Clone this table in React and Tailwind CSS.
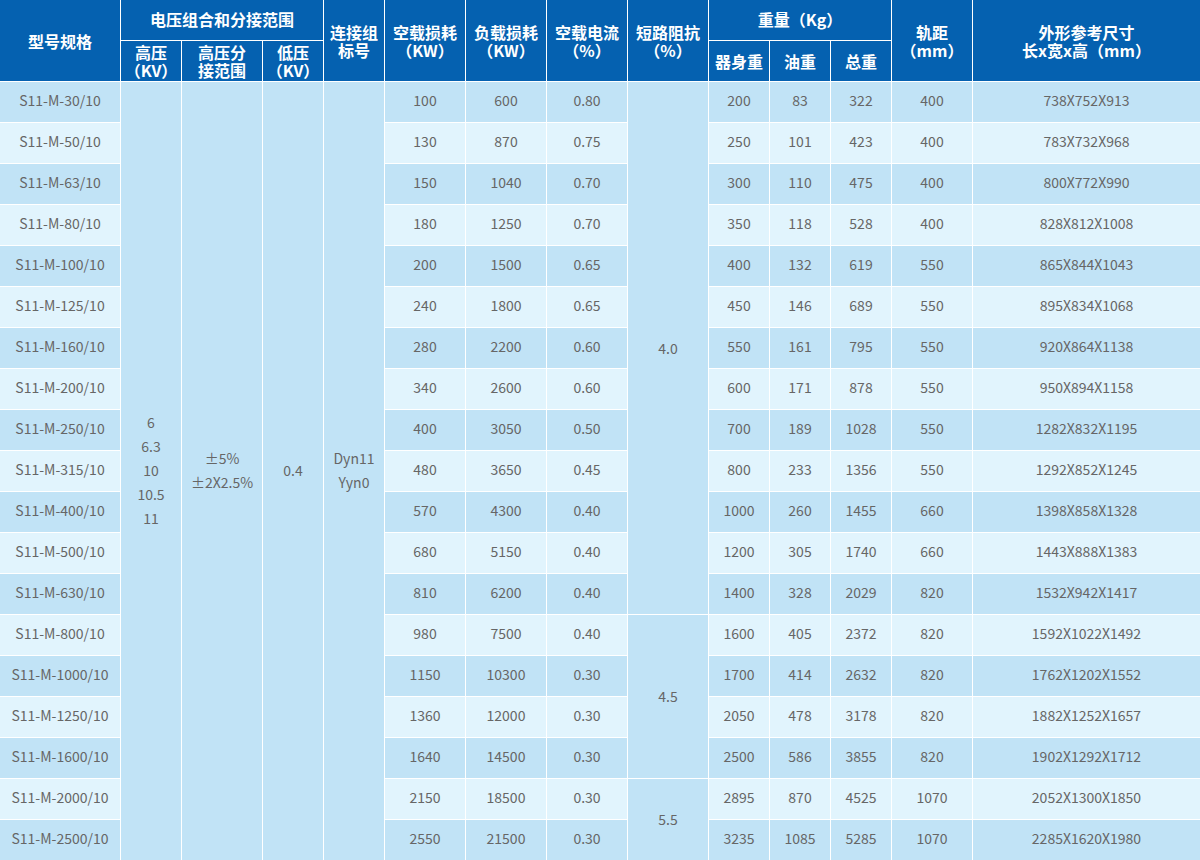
import React from "react";

const rows = [
  ["S11-M-30/10", 100, 600, "0.80", 200, 83, 322, 400, "738X752X913"],
  ["S11-M-50/10", 130, 870, "0.75", 250, 101, 423, 400, "783X732X968"],
  ["S11-M-63/10", 150, 1040, "0.70", 300, 110, 475, 400, "800X772X990"],
  ["S11-M-80/10", 180, 1250, "0.70", 350, 118, 528, 400, "828X812X1008"],
  ["S11-M-100/10", 200, 1500, "0.65", 400, 132, 619, 550, "865X844X1043"],
  ["S11-M-125/10", 240, 1800, "0.65", 450, 146, 689, 550, "895X834X1068"],
  ["S11-M-160/10", 280, 2200, "0.60", 550, 161, 795, 550, "920X864X1138"],
  ["S11-M-200/10", 340, 2600, "0.60", 600, 171, 878, 550, "950X894X1158"],
  ["S11-M-250/10", 400, 3050, "0.50", 700, 189, 1028, 550, "1282X832X1195"],
  ["S11-M-315/10", 480, 3650, "0.45", 800, 233, 1356, 550, "1292X852X1245"],
  ["S11-M-400/10", 570, 4300, "0.40", 1000, 260, 1455, 660, "1398X858X1328"],
  ["S11-M-500/10", 680, 5150, "0.40", 1200, 305, 1740, 660, "1443X888X1383"],
  ["S11-M-630/10", 810, 6200, "0.40", 1400, 328, 2029, 820, "1532X942X1417"],
  ["S11-M-800/10", 980, 7500, "0.40", 1600, 405, 2372, 820, "1592X1022X1492"],
  ["S11-M-1000/10", 1150, 10300, "0.30", 1700, 414, 2632, 820, "1762X1202X1552"],
  ["S11-M-1250/10", 1360, 12000, "0.30", 2050, 478, 3178, 820, "1882X1252X1657"],
  ["S11-M-1600/10", 1640, 14500, "0.30", 2500, 586, 3855, 820, "1902X1292X1712"],
  ["S11-M-2000/10", 2150, 18500, "0.30", 2895, 870, 4525, 1070, "2052X1300X1850"],
  ["S11-M-2500/10", 2550, 21500, "0.30", 3235, 1085, 5285, 1070, "2285X1620X1980"],
];

const dark = "bg-[#c1e3f6]";
const light = "bg-[#e1f4fd]";

const Th = ({ className = "", children }) => (
  <div
    className={`bg-[#0561b0] text-white font-bold text-[16px] leading-[18px] flex flex-col items-center justify-center text-center ${className}`}
  >
    {children}
  </div>
);

// plain row cells sit a touch above centre in the reference
const Td = ({ bg, className = "pb-[4px]", children }) => (
  <div className={`${bg} flex items-center justify-center ${className}`}>
    {children}
  </div>
);

const App = () => {
  return (
    <div
      className="w-[1200px] h-[860px] overflow-hidden bg-white"
      style={{ fontFamily: '"Noto Sans CJK SC", "Noto Sans", sans-serif' }}
    >
      <div className="grid grid-cols-[120px_60px_80px_60px_60px_80px_80px_80px_80px_60px_60px_60px_80px_1fr] auto-rows-[40px] gap-px bg-white text-[#666] text-[14px]">
        {/* header */}
        <Th className="row-span-2">型号规格</Th>
        <Th className="col-span-3 pb-[2px]">电压组合和分接范围</Th>
        <Th className="row-span-2">
          <span>连接组</span>
          <span>标号</span>
        </Th>
        <Th className="row-span-2">
          <span>空载损耗</span>
          <span>（KW）</span>
        </Th>
        <Th className="row-span-2">
          <span>负载损耗</span>
          <span>（KW）</span>
        </Th>
        <Th className="row-span-2">
          <span>空载电流</span>
          <span>（%）</span>
        </Th>
        <Th className="row-span-2">
          <span>短路阻抗</span>
          <span>（%）</span>
        </Th>
        <Th className="col-span-3 pb-[2px]">重量（Kg）</Th>
        <Th className="row-span-2">
          <span>轨距</span>
          <span>（mm）</span>
        </Th>
        <Th className="row-span-2">
          <span>外形参考尺寸</span>
          <span>长x宽x高（mm）</span>
        </Th>
        <Th className="leading-[16px]">
          <span>高压</span>
          <span>（KV）</span>
        </Th>
        <Th className="leading-[16px]">
          <span>高压分</span>
          <span>接范围</span>
        </Th>
        <Th className="leading-[16px]">
          <span>低压</span>
          <span>（KV）</span>
        </Th>
        <Th>器身重</Th>
        <Th>油重</Th>
        <Th>总重</Th>

        {/* body */}
        {rows.map((r, i) => {
          const bg = i % 2 === 0 ? dark : light;
          return (
            <React.Fragment key={r[0]}>
              <Td bg={bg}>{r[0]}</Td>
              {i === 0 && (
                <>
                  <Td bg={dark} className="row-span-19 flex-col leading-[24px] pb-[2px]">
                    <span>6</span>
                    <span>6.3</span>
                    <span>10</span>
                    <span>10.5</span>
                    <span>11</span>
                  </Td>
                  <Td bg={dark} className="row-span-19 flex-col leading-[24px] pb-[2px]">
                    <span>±5%</span>
                    <span>±2X2.5%</span>
                  </Td>
                  <Td bg={dark} className="row-span-19 pb-[2px]">0.4</Td>
                  <Td bg={dark} className="row-span-19 flex-col leading-[24px] pb-[2px]">
                    <span>Dyn11</span>
                    <span>Yyn0</span>
                  </Td>
                </>
              )}
              <Td bg={bg}>{r[1]}</Td>
              <Td bg={bg}>{r[2]}</Td>
              <Td bg={bg}>{r[3]}</Td>
              {i === 0 && <Td bg={dark} className="row-span-13">4.0</Td>}
              {i === 13 && <Td bg={dark} className="row-span-4">4.5</Td>}
              {i === 17 && <Td bg={dark} className="row-span-2">5.5</Td>}
              <Td bg={bg}>{r[4]}</Td>
              <Td bg={bg}>{r[5]}</Td>
              <Td bg={bg}>{r[6]}</Td>
              <Td bg={bg}>{r[7]}</Td>
              <Td bg={bg}>{r[8]}</Td>
            </React.Fragment>
          );
        })}
      </div>
    </div>
  );
};

export default App;
